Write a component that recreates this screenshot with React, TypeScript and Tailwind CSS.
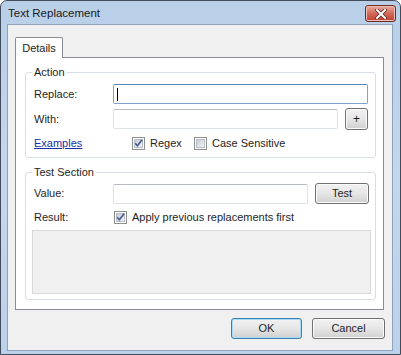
import type { ReactNode } from 'react'

const CheckBox = ({ checked }: { checked?: boolean }) => (
  <span className="flex h-[13px] w-[13px] shrink-0 items-center justify-center border border-[#8e8f8f] bg-white">
    <span className="flex h-[9px] w-[9px] items-center justify-center border border-[#b8bcc4] bg-linear-to-br from-[#c8ccd3] to-[#f4f5f6]">
      {checked && (
        <svg width="9" height="9" viewBox="0 0 9 9" className="overflow-visible">
          <path d="M1.2 4.2 L3.4 6.8 L8 0.8" fill="none" stroke="#4a5d9b" strokeWidth={1.7} strokeLinejoin="round" />
        </svg>
      )}
    </span>
  </span>
)

const Button = ({ children, className = '', isDefault }: { children: ReactNode; className?: string; isDefault?: boolean }) => (
  <button
    className={`flex shrink-0 items-center justify-center rounded-[3px] border bg-linear-to-b from-[#f2f2f2] via-[#e6e6e6] to-[#d0d0d0] leading-none ${
      isDefault ? 'border-[#3c7fb1] shadow-[inset_0_0_0_1px_#a8dcf4]' : 'border-[#707070] shadow-[inset_0_0_0_1px_#fbfbfb]'
    } ${className}`}
  >
    {children}
  </button>
)

const TextBox = ({ className = '', focused }: { className?: string; focused?: boolean }) => (
  <div
    className={`flex h-[20px] items-center rounded-[2px] border bg-white pl-[3px] ${
      focused ? 'border-[#7da2ce] border-t-[#5c87b8]' : 'border-[#dde2e8] border-t-[#b5b9c0]'
    } ${className}`}
  >
    {focused && <span className="h-[13px] w-px bg-black" />}
  </div>
)

export default function App() {
  return (
    <div className="flex h-[355px] w-[401px] flex-col overflow-hidden rounded-t-[7px] border border-[#404c5c] bg-linear-to-b from-[#b9cfe8] via-[#c3d7ee] to-[#bcd2ea] font-['Liberation_Sans',Arial,sans-serif] text-[11px] text-[#1e1e1e]">
      <div className="flex h-[23px] shrink-0 items-center justify-between pl-[7px] pr-[4px]">
        <span className="pt-[2px] text-[11.5px] text-[#1a1a1a]">Text Replacement</span>
        <div className="flex h-[17px] w-[31px] items-center justify-center self-start mt-[4px] rounded-[3px] border border-[#6b2a22] bg-linear-to-b from-[#e7aa9e] via-[#d1695a] to-[#c2402f] shadow-[inset_0_0_0_1px_#eec2b8]">
          <svg width="12" height="10" viewBox="0 0 12 10">
            <path d="M2 1 L10 9 M10 1 L2 9" stroke="#5a2a24" strokeWidth={3.6} strokeLinecap="square" />
            <path d="M2 1 L10 9 M10 1 L2 9" stroke="#ffffff" strokeWidth={2} strokeLinecap="square" />
          </svg>
        </div>
      </div>

      <div className="ml-[6px] mr-[7px] mb-[3px] flex flex-1 flex-col border border-[#8ea2bd] bg-[#f0f0f0] pl-[7px] pr-[7px] pt-[12px]">
        <div className="relative z-10 -mb-px flex h-[21px] w-[48px] items-center justify-center rounded-t-[2px] border border-b-0 border-[#898c95] bg-white">
          Details
        </div>

        <div className="flex w-[369px] flex-col border border-[#898c95] bg-white pl-[9px] pr-[7px] pt-[7px] pb-[9px]">
          <fieldset className="rounded-[3px] border border-[#d5dfe5]">
            <legend className="ml-[6px] px-[2px] leading-[14px]">Action</legend>
            <div className="flex flex-col pl-[8px] pt-[5px] pb-[7px]">
              <div className="flex h-[20px] items-center">
                <span className="w-[79px]">Replace:</span>
                <TextBox focused className="w-[255px]" />
              </div>
              <div className="mt-[4px] flex h-[22px] items-center">
                <span className="w-[79px]">With:</span>
                <TextBox className="w-[225px]" />
                <Button className="ml-[7px] h-[22px] w-[23px] text-[12px]">+</Button>
              </div>
              <div className="mt-[7px] flex h-[13px] items-center">
                <span className="w-[79px] text-[#1b2fa8] underline">Examples</span>
                <label className="ml-[19px] flex w-[62px] items-center gap-[5px]">
                  <CheckBox checked />
                  <span>Regex</span>
                </label>
                <label className="flex items-center gap-[5px]">
                  <CheckBox />
                  <span>Case Sensitive</span>
                </label>
              </div>
            </div>
          </fieldset>

          <fieldset className="mt-[7px] rounded-[3px] border border-[#d5dfe5]">
            <legend className="ml-[6px] px-[2px] leading-[14px]">Test Section</legend>
            <div className="flex flex-col pt-[4px] pb-[5px]">
              <div className="flex h-[21px] items-center pl-[8px]">
                <span className="w-[79px]">Value:</span>
                <TextBox className="w-[195px]" />
                <Button className="ml-[7px] h-[21px] w-[54px]">Test</Button>
              </div>
              <div className="mt-[6px] flex h-[14px] items-center pl-[8px]">
                <span className="w-[80px]">Result:</span>
                <label className="flex items-center gap-[5px]">
                  <CheckBox checked />
                  <span>Apply previous replacements first</span>
                </label>
              </div>
              <div className="ml-[6px] mt-[6px] h-[64px] w-[339px] border border-[#d9d9d9] bg-[#f0f0f0] shadow-[0_0_0_1px_#ffffff]" />
            </div>
          </fieldset>
        </div>

        <div className="mt-[8px] flex justify-end gap-[10px]">
          <Button isDefault className="h-[21px] w-[71px]">OK</Button>
          <Button className="h-[21px] w-[73px]">Cancel</Button>
        </div>
      </div>
    </div>
  )
}
